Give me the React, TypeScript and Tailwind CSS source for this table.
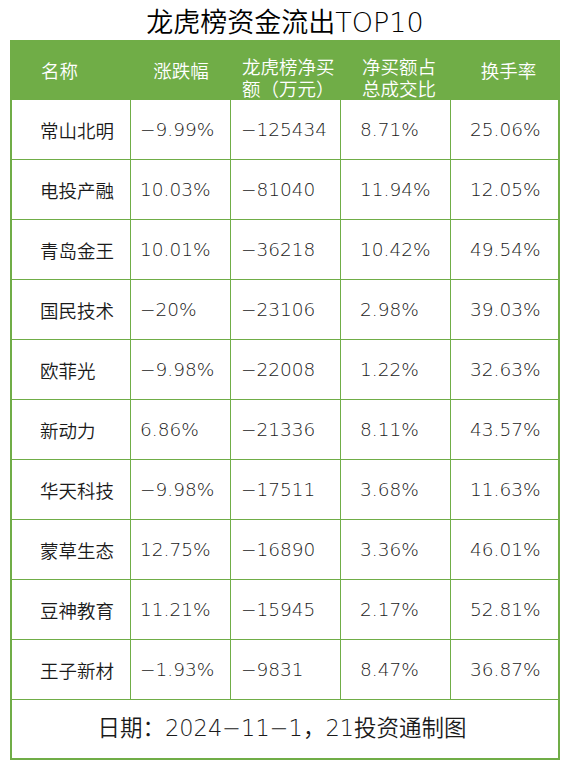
import React from 'react';

interface Row {
  name: string;
  change: string;
  net: string;
  ratio: string;
  turnover: string;
}

const rows: Row[] = [
  { name: '常山北明', change: '−9.99%', net: '−125434', ratio: '8.71%', turnover: '25.06%' },
  { name: '电投产融', change: '10.03%', net: '−81040', ratio: '11.94%', turnover: '12.05%' },
  { name: '青岛金王', change: '10.01%', net: '−36218', ratio: '10.42%', turnover: '49.54%' },
  { name: '国民技术', change: '−20%', net: '−23106', ratio: '2.98%', turnover: '39.03%' },
  { name: '欧菲光', change: '−9.98%', net: '−22008', ratio: '1.22%', turnover: '32.63%' },
  { name: '新动力', change: '6.86%', net: '−21336', ratio: '8.11%', turnover: '43.57%' },
  { name: '华天科技', change: '−9.98%', net: '−17511', ratio: '3.68%', turnover: '11.63%' },
  { name: '蒙草生态', change: '12.75%', net: '−16890', ratio: '3.36%', turnover: '46.01%' },
  { name: '豆神教育', change: '11.21%', net: '−15945', ratio: '2.17%', turnover: '52.81%' },
  { name: '王子新材', change: '−1.93%', net: '−9831', ratio: '8.47%', turnover: '36.87%' },
];

const font = "font-['DejaVu_Sans','Noto_Sans_CJK_SC',sans-serif]";
const cols = 'grid grid-cols-[119px_100px_110px_110px_107px]';

export default function App() {
  return (
    <div className={`w-[570px] h-[770px] bg-white ${font} font-[350]`}>
      {/* Title */}
      <div className="h-10 flex items-center justify-center pt-1 text-[27px] text-black leading-none">
        龙虎榜资金流出TOP10
      </div>

      <div className="ml-[10px] w-[550px] border-2 border-[#70ad47]">
        {/* Header */}
        <div className={`${cols} h-[58px] bg-[#70ad47] text-white text-[18.5px] leading-[22px]`}>
          <div className="flex items-center pl-[29px]">名称</div>
          <div className="flex items-center justify-center">涨跌幅</div>
          <div className="flex items-center pl-[11px] pt-[15px]">
            <span>龙虎榜净买<br />额（万元）</span>
          </div>
          <div className="flex items-center pl-[21px] pt-[15px]">
            <span>净买额占<br />总成交比</span>
          </div>
          <div className="flex items-center justify-center pl-[8px]">换手率</div>
        </div>

        {/* Body */}
        {rows.map((r) => (
          <div key={r.name} className={`${cols} h-[60px] border-b border-[#70ad47] text-[18.5px] text-[#1a1a1a]`}>
            <div className="flex items-center pl-[28px] border-r border-[#70ad47] pt-[4px]">{r.name}</div>
            <div className="flex items-center pl-[9px] border-r border-[#70ad47]">{r.change}</div>
            <div className="flex items-center pl-[10px] border-r border-[#70ad47]">{r.net}</div>
            <div className="flex items-center pl-[19px] border-r border-[#70ad47]">{r.ratio}</div>
            <div className="flex items-center pl-[19px]">{r.turnover}</div>
          </div>
        ))}

        {/* Footer */}
        <div className="h-[58px] flex items-center justify-center pr-[6px] text-[22.5px] text-[#1a1a1a]">
          日期：2024−11−1，21投资通制图
        </div>
      </div>
    </div>
  );
}
